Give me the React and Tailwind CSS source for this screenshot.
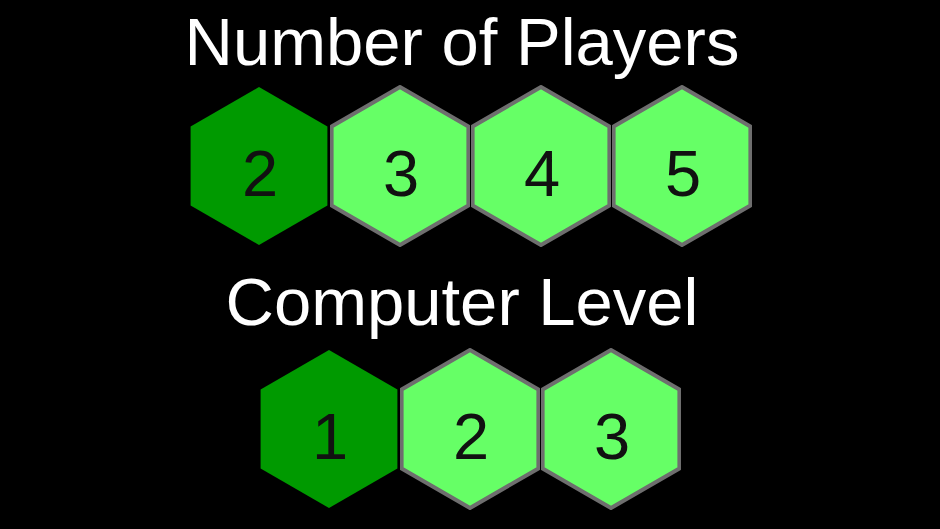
import React from "react";

const HEX_POINTS = "70,2 138.4,41.5 138.4,120.5 70,160 1.6,120.5 1.6,41.5";

function Hex({ label, selected }) {
  return (
    <svg width="140" height="162" viewBox="0 0 140 162" className="block">
      <polygon
        points={HEX_POINTS}
        fill={selected ? "#009a00" : "#66ff66"}
        stroke={selected ? "#009a00" : "#6e6e6e"}
        strokeWidth={selected ? 0 : 4}
        strokeLinejoin="round"
      />
      <text
        x="71"
        y="111"
        textAnchor="middle"
        fontSize="65"
        fill="#111"
        fontFamily="'Liberation Sans', Arial, sans-serif"
      >
        {label}
      </text>
    </svg>
  );
}

function HexRow({ options, selected }) {
  return (
    <div className="flex justify-center gap-[1px]">
      {options.map((n) => (
        <Hex key={n} label={n} selected={n === selected} />
      ))}
    </div>
  );
}

export default function App() {
  return (
    <div
      className="w-[940px] h-[529px] bg-black overflow-hidden flex flex-col items-center text-white pt-[8px]"
      style={{ fontFamily: "'Liberation Sans', Arial, sans-serif" }}
    >
      <h1 className="text-[67px] leading-[67px] h-[67px] pr-[16px]">Number of Players</h1>
      <div className="mt-[10px]">
        <HexRow options={[2, 3, 4, 5]} selected={2} />
      </div>
      <h2 className="text-[67px] leading-[67px] h-[67px] mt-[21px] pr-[16px]">Computer Level</h2>
      <div className="mt-[13px]">
        <HexRow options={[1, 2, 3]} selected={1} />
      </div>
    </div>
  );
}
